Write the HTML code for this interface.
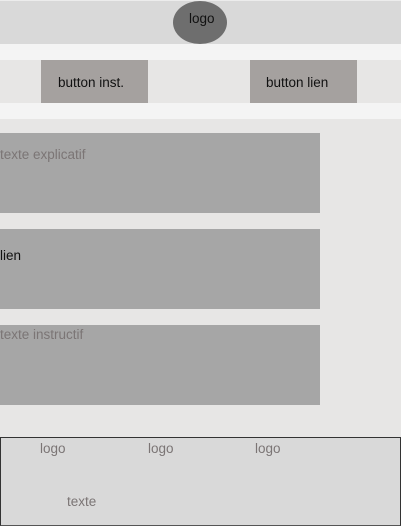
<!DOCTYPE html>
<html><head><meta charset="utf-8"><style>
*{margin:0;padding:0;box-sizing:border-box}
body{width:401px;height:526px;background:#e7e6e5;position:relative;overflow:hidden;font-family:"Liberation Sans",sans-serif;font-size:13.5px}
div,span{position:absolute}
.t{white-space:nowrap;line-height:15px}
</style></head><body>
<div style="left:0;top:0;width:401px;height:1px;background:#ececec"></div>
<div style="left:0;top:1px;width:401px;height:43px;background:#d9d9d9"></div>
<div style="left:173px;top:1px;width:54px;height:43px;border-radius:50%;background:#6e6e6e"></div>
<span class="t" style="left:189px;top:11px;color:#111">logo</span>
<div style="left:0;top:44px;width:401px;height:16px;background:#f4f4f4"></div>
<div style="left:0;top:103px;width:401px;height:16px;background:#f4f4f4"></div>
<div style="left:41px;top:60px;width:107px;height:43px;background:#a5a19f"></div>
<div style="left:250px;top:60px;width:107px;height:43px;background:#a5a19f"></div>
<span class="t" style="left:58px;top:75px;color:#111">button inst.</span>
<span class="t" style="left:266px;top:75px;color:#111">button lien</span>
<div style="left:0;top:133px;width:320px;height:80px;background:#a6a6a6"></div>
<div style="left:0;top:229px;width:320px;height:80px;background:#a6a6a6"></div>
<div style="left:0;top:325px;width:320px;height:80px;background:#a6a6a6"></div>
<span class="t" style="left:0;top:147px;color:#7b7575">texte explicatif</span>
<span class="t" style="left:0;top:248px;color:#111">lien</span>
<span class="t" style="left:0;top:327px;color:#7b7575">texte instructif</span>
<div style="left:0;top:437px;width:401px;height:89px;background:#d9d9d9;border:1px solid #333;border-bottom-color:#555"></div>
<span class="t" style="left:40px;top:441px;color:#7b7575">logo</span>
<span class="t" style="left:148px;top:441px;color:#7b7575">logo</span>
<span class="t" style="left:255px;top:441px;color:#7b7575">logo</span>
<span class="t" style="left:67px;top:494px;color:#7b7575">texte</span>
</body></html>
